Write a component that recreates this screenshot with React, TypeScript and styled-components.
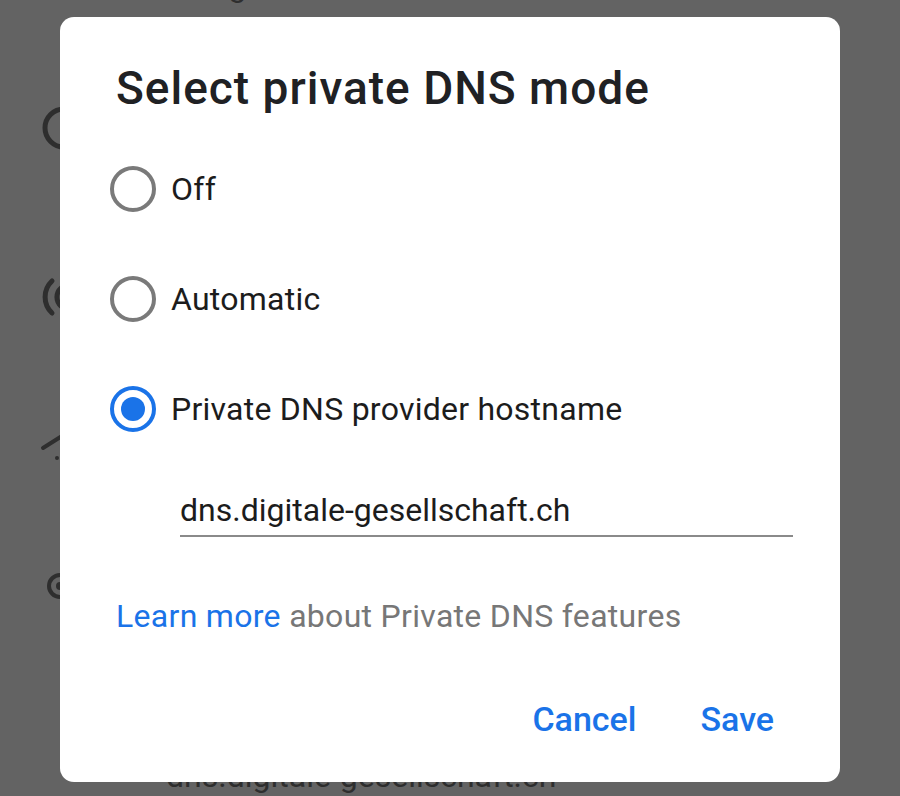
import styled, { createGlobalStyle } from 'styled-components';

const GlobalStyle = createGlobalStyle`
	html, body {
		margin: 0;
		padding: 0;
		background: #636363;
	}

	body {
		font-family: Roboto, "Noto Sans", sans-serif;
	}
`;

const Screen = styled.div`
	position: relative;
	width: 900px;
	height: 796px;
	overflow: hidden;
	background: #636363;
`;

// settings page behind the scrim
const SettingsList = styled.div`
	display: flex;
	flex-direction: column;
	margin-top: -36px;
`;

const SettingsRow = styled.div<{ $height: number; $top?: boolean }>`
	display: flex;
	align-items: ${(p) => (p.$top ? 'flex-start' : 'center')};
	height: ${(p) => p.$height}px;
`;

const RowIcon = styled.div`
	width: 166px;
	flex-shrink: 0;
	padding-left: 40px;
	box-sizing: border-box;
	display: flex;
	align-items: center;
	color: #2e2e2e;
`;

const RowText = styled.div`
	font-size: 32px;
	color: #2e2e2e;
	line-height: 44px;
`;

const Dialog = styled.div`
	position: absolute;
	left: 60px;
	top: 17px;
	width: 780px;
	height: 765px;
	box-sizing: border-box;
	background: #fff;
	border-radius: 14px;
	padding: 45px 0 0;
	display: flex;
	flex-direction: column;
`;

const Title = styled.h1`
	margin: 0 0 20px 56px;
	font-size: 46px;
	line-height: 52px;
	font-weight: 500;
	color: #202124;
	letter-spacing: 1px;
`;

const OptionList = styled.div`
	display: flex;
	flex-direction: column;
`;

const Option = styled.label`
	display: flex;
	align-items: center;
	gap: 15px;
	height: 110px;
	padding-left: 50px;
	cursor: pointer;
`;

const Radio = styled.span<{ $checked?: boolean }>`
	width: 46px;
	height: 46px;
	box-sizing: border-box;
	border-radius: 50%;
	border: 4px solid ${(p) => (p.$checked ? '#1a73e8' : '#7a7a7a')};
	display: flex;
	align-items: center;
	justify-content: center;

	&::after {
		content: '';
		display: ${(p) => (p.$checked ? 'block' : 'none')};
		width: 24px;
		height: 24px;
		border-radius: 50%;
		background: #1a73e8;
	}
`;

const OptionLabel = styled.span`
	font-size: 32px;
	line-height: 44px;
	color: #1c1c1c;
	letter-spacing: 0.25px;
`;

const HostField = styled.div`
	margin: 24px 47px 0 120px;
	font-size: 32px;
	line-height: 44px;
	color: #1c1c1c;
	padding-bottom: 3px;
	border-bottom: 2px solid #8a8a8a;
`;

const Note = styled.p`
	margin: 57px 0 0 56px;
	font-size: 32px;
	line-height: 44px;
	color: #777;
	letter-spacing: 0.3px;
`;

const NoteLink = styled.a`
	color: #1a73e8;
	text-decoration: none;
`;

const Actions = styled.div`
	margin-top: 57px;
	display: flex;
	justify-content: flex-end;
	gap: 64px;
	padding-right: 66px;
`;

const ActionButton = styled.button`
	border: 0;
	background: none;
	padding: 0;
	font-family: Roboto, "Noto Sans", sans-serif;
	font-size: 34px;
	line-height: 48px;
	font-weight: 500;
	color: #1a73e8;
	cursor: pointer;
`;

const RingIcon = () => (
	<svg width="48" height="48" viewBox="0 0 48 48">
		<circle cx="24" cy="24" r="19" fill="none" stroke="currentColor" strokeWidth="5" />
	</svg>
);

const HotspotIcon = () => (
	<svg width="56" height="56" viewBox="0 0 56 56">
		<path d="M12 44 A22 22 0 0 1 12 12" fill="none" stroke="currentColor" strokeWidth="5" strokeLinecap="round" />
		<path d="M21 37 A12 12 0 0 1 21 19" fill="none" stroke="currentColor" strokeWidth="5" strokeLinecap="round" />
	</svg>
);

const SlashIcon = () => (
	<svg width="48" height="48" viewBox="0 0 48 48">
		<path d="M3 31 L22 19" fill="none" stroke="currentColor" strokeWidth="4" strokeLinecap="round" />
		<circle cx="17" cy="41" r="2" fill="currentColor" />
	</svg>
);

const TargetIcon = () => (
	<svg width="48" height="48" viewBox="0 0 48 48">
		<circle cx="20" cy="24" r="11" fill="none" stroke="currentColor" strokeWidth="4" />
		<circle cx="20" cy="24" r="4" fill="currentColor" />
	</svg>
);

const options = [
	{ label: 'Off', checked: false },
	{ label: 'Automatic', checked: false },
	{ label: 'Private DNS provider hostname', checked: true },
];

const App = () => {
	return (
		<Screen>
			<GlobalStyle />
			<SettingsList>
				<SettingsRow $height={80} $top>
					<RowIcon />
					<RowText>Using Wi‑Fi</RowText>
				</SettingsRow>
				<SettingsRow $height={168}>
					<RowIcon>
						<RingIcon />
					</RowIcon>
				</SettingsRow>
				<SettingsRow $height={170}>
					<RowIcon>
						<HotspotIcon />
					</RowIcon>
				</SettingsRow>
				<SettingsRow $height={118}>
					<RowIcon>
						<SlashIcon />
					</RowIcon>
				</SettingsRow>
				<SettingsRow $height={172}>
					<RowIcon>
						<TargetIcon />
					</RowIcon>
				</SettingsRow>
				<SettingsRow $height={164}>
					<RowIcon />
					<RowText>
						Private DNS
						<br />
						dns.digitale-gesellschaft.ch
					</RowText>
				</SettingsRow>
			</SettingsList>

			<Dialog role="dialog">
				<Title>Select private DNS mode</Title>
				<OptionList>
					{options.map((option) => (
						<Option key={option.label}>
							<Radio $checked={option.checked} />
							<OptionLabel>{option.label}</OptionLabel>
						</Option>
					))}
				</OptionList>
				<HostField>dns.digitale-gesellschaft.ch</HostField>
				<Note>
					<NoteLink href="#">Learn more</NoteLink> about Private DNS features
				</Note>
				<Actions>
					<ActionButton>Cancel</ActionButton>
					<ActionButton>Save</ActionButton>
				</Actions>
			</Dialog>
		</Screen>
	);
};

export default App;
